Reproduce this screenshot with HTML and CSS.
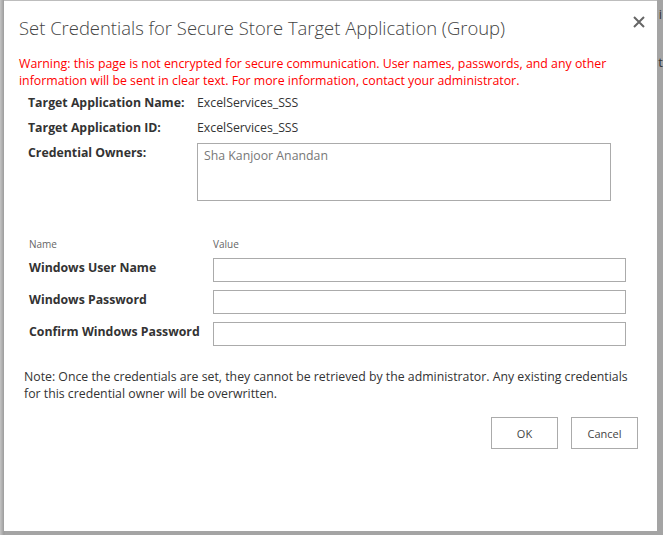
FILE: index.html
```html
<!DOCTYPE html>
<html>
<head>
<meta charset="utf-8">
<link rel="stylesheet" href="styles.css">
</head>
<body>
<div class="backdrop">
  <span class="bg-frag frag1">i</span>
  <span class="bg-frag frag2">t</span>
  <div class="dialog">
    <div class="title-row">
      <h1 class="title">Set Credentials for Secure Store Target Application (Group)</h1>
      <button class="close" aria-label="Close">
        <svg width="12" height="12" viewBox="0 0 12 12"><path d="M1 1 L11 11 M11 1 L1 11" stroke="#666" stroke-width="2"/></svg>
      </button>
    </div>
    <p class="warning">Warning: this page is not encrypted for secure communication. User names, passwords, and any other information will be sent in clear text. For more information, contact your administrator.</p>
    <div class="info">
      <div class="info-label">Target Application Name:</div>
      <div class="info-value">ExcelServices_SSS</div>
      <div class="info-label">Target Application ID:</div>
      <div class="info-value">ExcelServices_SSS</div>
      <div class="info-label">Credential Owners:</div>
      <div class="owners">Sha Kanjoor Anandan</div>
    </div>
    <div class="fields">
      <div class="col-head">Name</div>
      <div class="col-head">Value</div>
      <div class="field-label">Windows User Name</div>
      <div class="input"></div>
      <div class="field-label">Windows Password</div>
      <div class="input"></div>
      <div class="field-label">Confirm Windows Password</div>
      <div class="input"></div>
    </div>
    <p class="note">Note: Once the credentials are set, they cannot be retrieved by the administrator. Any existing credentials for this credential owner will be overwritten.</p>
    <div class="buttons">
      <button class="btn">OK</button>
      <button class="btn">Cancel</button>
    </div>
  </div>
</div>
</body>
</html>
```
FILE: styles.css
```css
html, body {
  margin: 0;
  padding: 0;
}
body {
  width: 663px;
  height: 535px;
  overflow: hidden;
  background: #a6a6a6;
  font-family: "Open Sans", "Noto Sans", sans-serif;
  color: #444;
}
.backdrop {
  position: relative;
  width: 663px;
  height: 535px;
  background: linear-gradient(to right, #c4c4c4 0, #9c9c9c 4px, #a4a4a4 5px);
  padding: 0 6px 0 4px;
  box-sizing: border-box;
}
.bg-frag {
  position: absolute;
  right: 1px;
  font-size: 13px;
  color: #333;
}
.frag1 { top: 5px; }
.frag2 { top: 53px; right: 0; }
.dialog {
  background: #fff;
  height: 531px;
  box-sizing: border-box;
  padding: 13px 0 0 15px;
  border-top: 1px solid #bdbdbd;
}
.title-row {
  display: flex;
  justify-content: space-between;
  align-items: flex-start;
  padding-right: 12px;
}
.title {
  margin: 0;
  font-family: "Open Sans", sans-serif;
  font-weight: 300;
  font-size: 18.45px;
  line-height: 28px;
  color: #444;
}
.close {
  border: 0;
  background: none;
  padding: 0;
  margin-top: 2px;
  width: 12px;
  height: 12px;
  display: flex;
}
.warning {
  margin: 13px 0 0 0;
  color: #ff0000;
  font-size: 12.35px;
  line-height: 17px;
  width: 625px;
}
.info {
  display: grid;
  grid-template-columns: 169px 414px;
  margin: 5px 0 0 9px;
  row-gap: 7px;
  font-size: 12.3px;
  line-height: 18px;
}
.info-label {
  font-weight: 700;
  color: #333;
}
.info-value {
  color: #333;
}
.owners {
  border: 1px solid #ababab;
  height: 58px;
  box-sizing: border-box;
  padding: 3px 6px;
  color: #777;
  margin-top: -1px;
}
.fields {
  display: grid;
  grid-template-columns: 184px 413px;
  margin: 36px 0 0 10px;
  row-gap: 8px;
  align-items: center;
}
.col-head {
  font-size: 10px;
  color: #666;
  line-height: 14px;
  margin-bottom: -1px;
}
.field-label {
  font-weight: 700;
  font-size: 12.3px;
  color: #333;
  margin-top: -5px;
}
.input {
  height: 24px;
  border: 1px solid #ababab;
  box-sizing: border-box;
}
.note {
  margin: 22px 0 0 5px;
  font-size: 12.3px;
  line-height: 17px;
  color: #333;
  width: 615px;
}
.buttons {
  display: flex;
  justify-content: flex-end;
  gap: 13px;
  margin: 15px 19px 0 0;
}
.btn {
  width: 67px;
  height: 32px;
  border: 1px solid #ababab;
  background: #fff;
  font-family: "Open Sans", sans-serif;
  font-size: 11px;
  color: #444;
  padding: 0;
}
```
